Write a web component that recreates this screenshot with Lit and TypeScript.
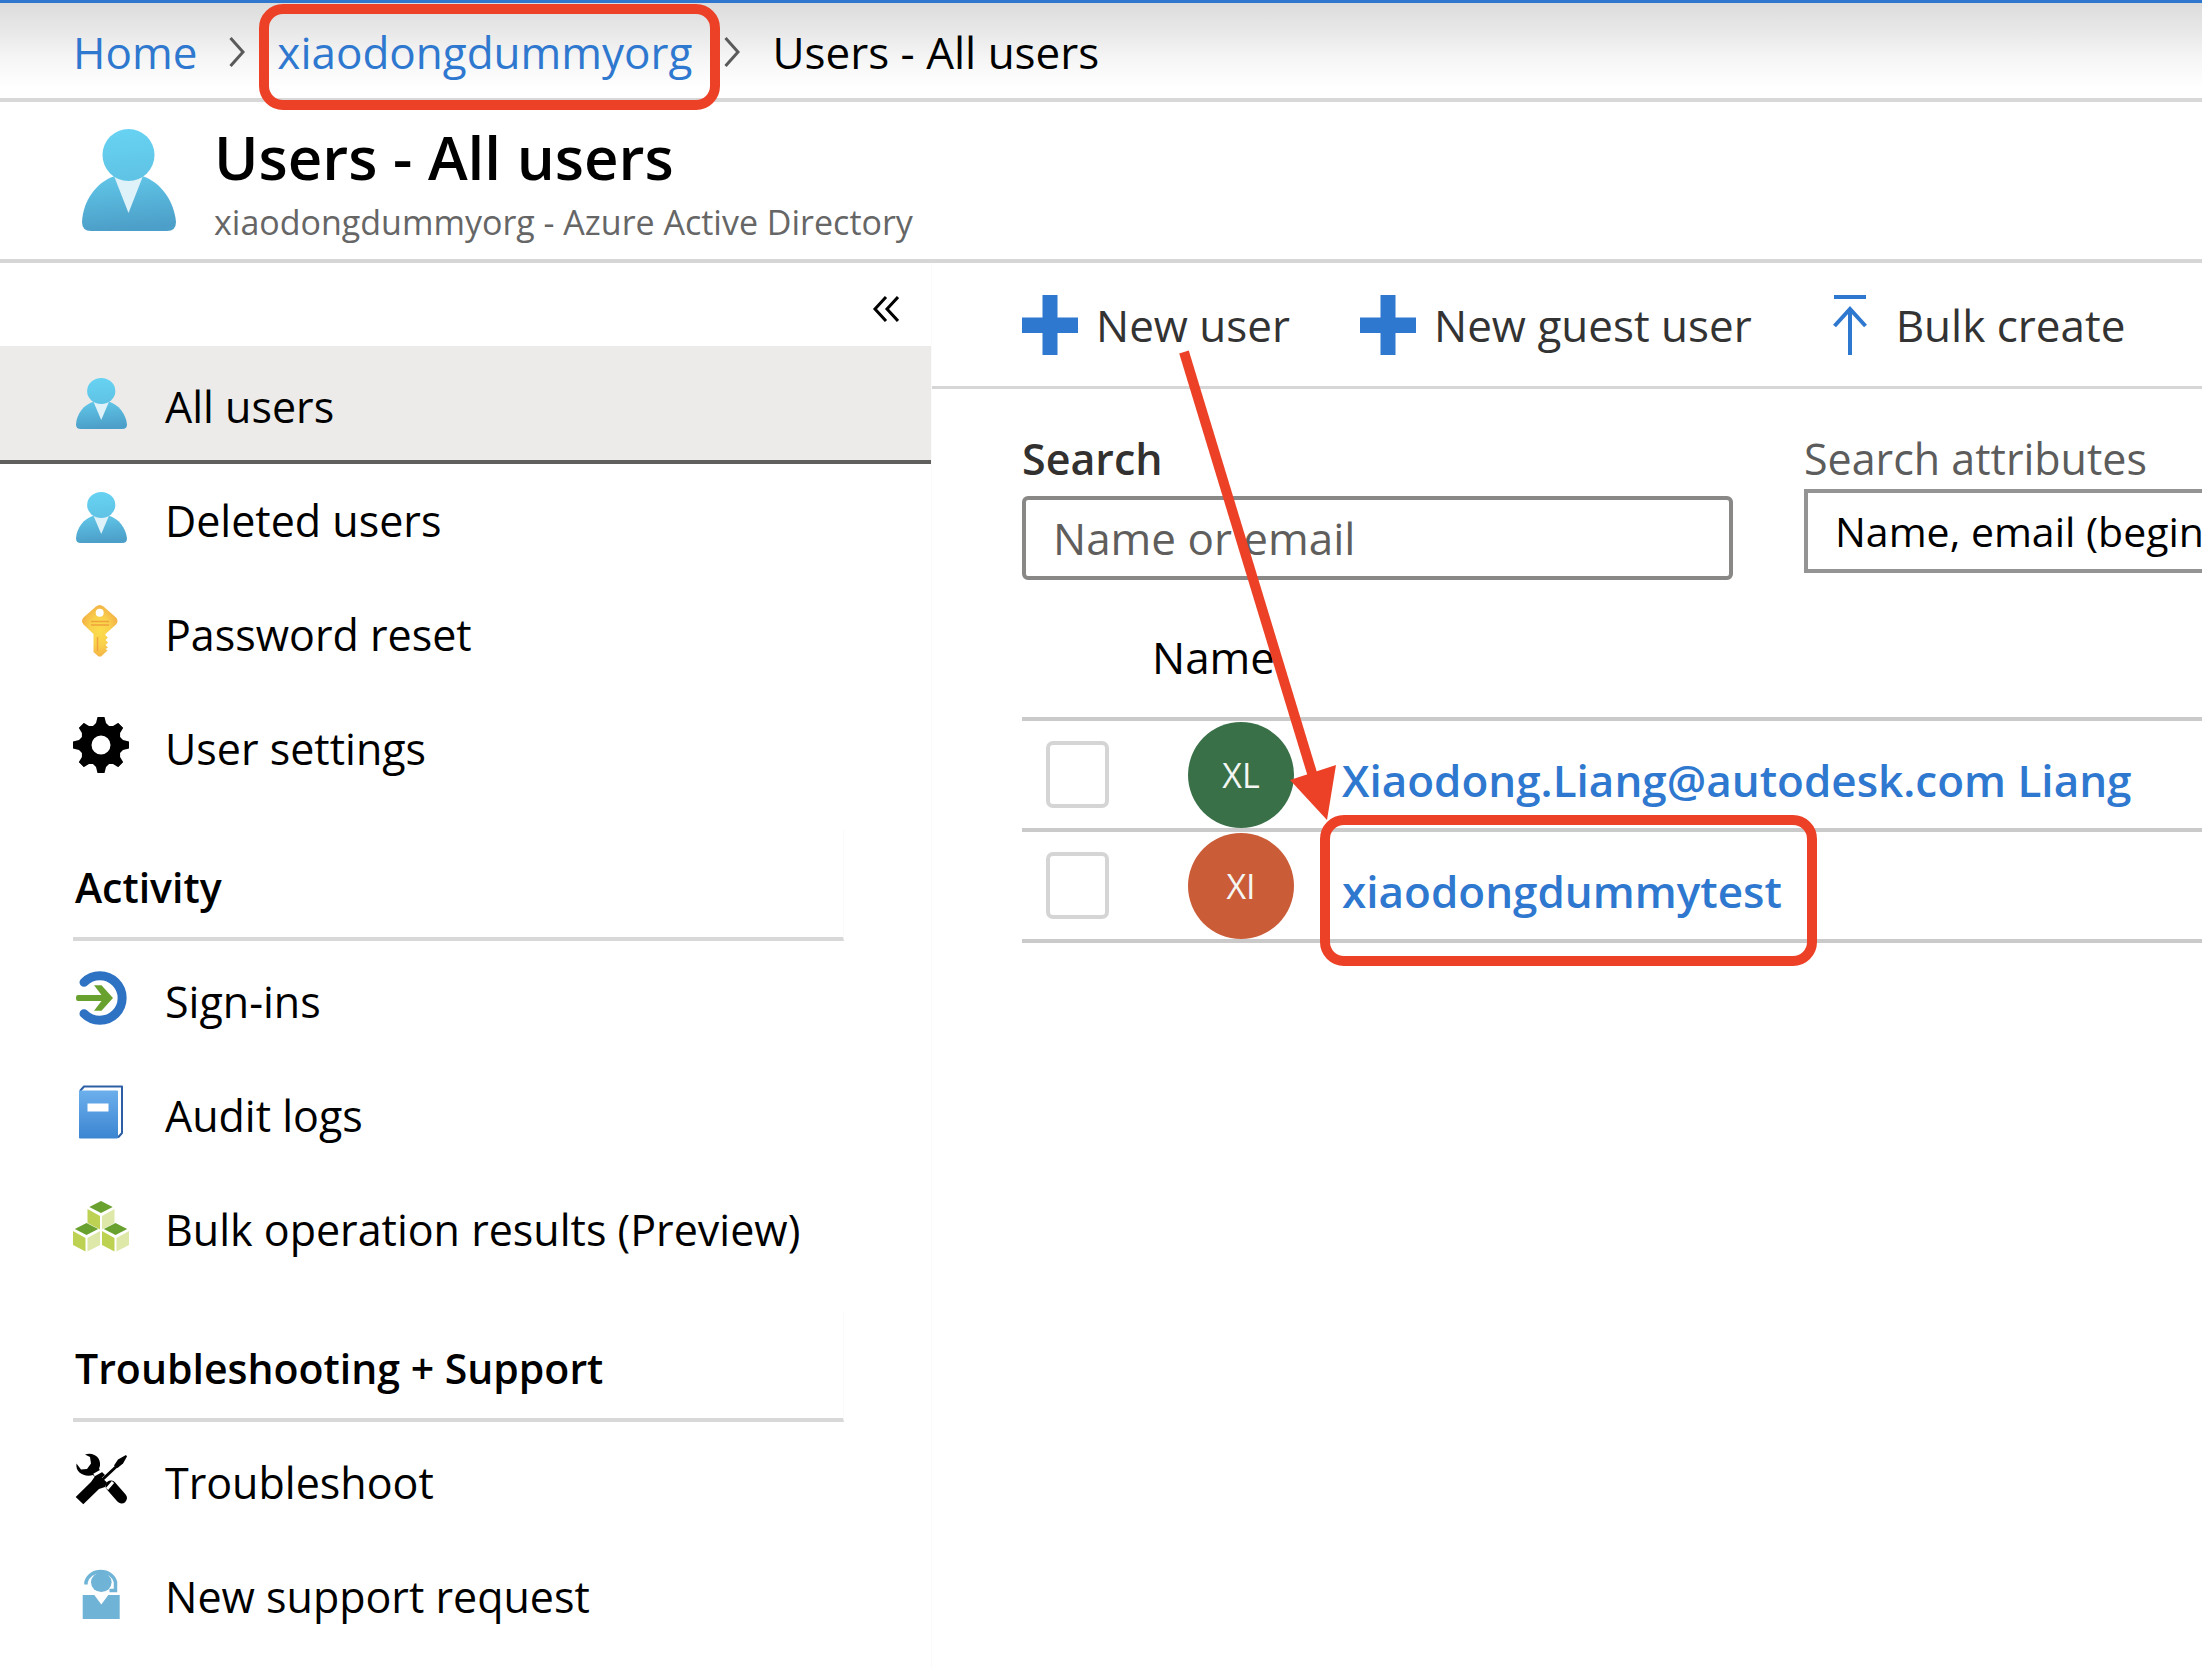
import { LitElement, html, svg, css, nothing, type TemplateResult } from "lit";
import { customElement } from "lit/decorators.js";
import { classMap } from "lit/directives/class-map.js";

interface NavItem {
  label: string;
  icon: TemplateResult;
  selected?: boolean;
}

interface NavGroup {
  title?: string;
  items: NavItem[];
}

interface User {
  name: string;
  initials: string;
  tone: "green" | "orange";
  marked?: boolean;
}

const userIcon = (cls: string) => html`
  <svg class=${cls} viewBox="0 0 94 102" preserveAspectRatio="none" aria-hidden="true">
    <defs>
      <linearGradient id="body" x1="0" y1="0" x2="0.15" y2="1">
        <stop offset="0" stop-color="#62c8ea" />
        <stop offset="1" stop-color="#4c9fc8" />
      </linearGradient>
      <linearGradient id="head" x1="0" y1="0" x2="0.1" y2="1">
        <stop offset="0" stop-color="#68d3f3" />
        <stop offset="1" stop-color="#5fc3e5" />
      </linearGradient>
    </defs>
    <path fill="url(#body)" d="M33 47C14 53 1 72 0 93Q0 102 9 102H85Q94 102 94 93C92 72 79 53 60 47Z" />
    <path fill="#dff1f9" d="M32 47H61L46.500 84Z" />
    <circle fill="url(#head)" cx="46.500" cy="26" r="26" />
  </svg>`;

const icon = (content: TemplateResult) =>
  html`<svg class="nav-icon" viewBox="0 0 56 56" aria-hidden="true">${content}</svg>`;

const smallUser = html`<span class="nav-icon">${userIcon("nav-user")}</span>`;

const keyIcon = icon(svg`
  <defs>
    <radialGradient id="key" cx="0.5" cy="0.5" r="0.55">
      <stop offset="0" stop-color="#fbdc4a" />
      <stop offset="0.5" stop-color="#f9d14b" />
      <stop offset="1" stop-color="#f3ae45" />
    </radialGradient>
  </defs>
  <path fill="url(#key)" fill-rule="evenodd"
    d="M23 3.500Q26.700 0.500 30.500 3.500L43 14.500Q46 18 43 21.500L32.500 31V32.500L35 34.500L32.500 37L35 39.500L32.500 42L35 44.500L32.500 46L34.500 47.500L28 53.500H25.500L20.500 49V31L10.500 21.500Q7.500 18 10.500 14.500ZM26.700 5.700A4 4 0 1 0 26.700 13.700A4 4 0 1 0 26.700 5.700Z" />
  <path stroke="#f0a23c" stroke-width="1.400" fill="none" d="M18 18.500H36M18 22H36M24.500 34V48" />`);

const gearIcon = icon(svg`
  <circle cx="28" cy="28" r="15" fill="none" stroke="#000" stroke-width="11" />
  ${[0, 45, 90, 135, 180, 225, 270, 315].map(
    (a) => svg`<path d="M24.500 0H31.500L33 6L37 10L28 18L19 10L23 6Z" clip-path="url(#ring)" transform="rotate(${a} 28 28)" />`,
  )}
  <clipPath id="ring"><rect x="0" y="0" width="56" height="17" /></clipPath>`);

const signInIcon = icon(svg`
  <path fill="none" stroke="#2d72c3" stroke-width="9" stroke-linecap="round" d="M11 12.300A22.300 22.300 0 1 1 11 43.700" />
  <path fill="#69a12f" d="M5 25H28.500L21 15.300H28.500L40 28L28.500 40.700H21L28.500 31H5Q3 31 3 28T5 25Z" />`);

const auditIcon = icon(svg`
  <defs>
    <linearGradient id="book" x1="0" y1="0" x2="0" y2="1">
      <stop offset="0" stop-color="#6cafec" />
      <stop offset="1" stop-color="#3b85d1" />
    </linearGradient>
  </defs>
  <path fill="#fff" stroke="#2c5fa6" stroke-width="2" stroke-linejoin="round" d="M7 7L11 2.500H49V49L45 53.500" />
  <rect x="6" y="6.500" width="39" height="48" rx="1" fill="url(#book)" />
  <rect x="14.500" y="19.500" width="21" height="8" fill="#fff" />`);

const cube = (dx: number, dy: number) => svg`
  <g transform="translate(${dx} ${dy})">
    <path fill="#69a12f" d="M28 3L39.700 9L28 15L16.300 9Z" />
    <path fill="#bdd253" d="M14.500 11L27 18V31.500L14.500 25Z" />
    <path fill="#dde8a9" d="M41.500 11L29 18V31.500L41.500 25Z" />
  </g>`;

const cubesIcon = icon(svg`${cube(0, 0)}${cube(-14.5, 22)}${cube(14.5, 22)}`);

const toolsIcon = icon(svg`
  <path d="M12 3.500C20 0.500 28 6 27 14.500L26 18L32 24L25.500 29.500L20 24C12 26.500 2 22 3.500 12.500L8 18.500L14 18L18 12.500L17 6Z" />
  <path stroke="#000" stroke-width="11" stroke-linecap="round" d="M38 35L48.500 47" />
  <path stroke="#fff" stroke-width="3" fill="none" d="M21 24L29 19.500M34 38L40 31" />
  <path d="M2.700 46L18 31L21.500 26L26.500 24.500L34 31.500L32 36L26 38L10.300 53.300Z" />
  <path stroke="#000" stroke-width="3" d="M29 29L46 13" />
  <path d="M41 14.500L45 8.500L53 4L54 5.500L50 12.500L44.500 17Z" />`);

const supportIcon = icon(svg`
  <ellipse cx="28.300" cy="17.300" rx="10.300" ry="9.700" fill="#6fb3d6" />
  <path fill="none" stroke="#6fb3d6" stroke-width="3.500" d="M13 19.500V17A15.200 14 0 0 1 42.500 17V25.500H36.500" />
  <path fill="#6fb3d6" d="M9.700 30H21.300L28.300 39.500L35.300 30H46.700V54H9.700Z" />`);

const plusIcon = html`
  <svg class="command-icon" viewBox="0 0 56 60" aria-hidden="true">
    <path fill="#2f78cf" d="M20.500 0H35.500V22.500H56V38H35.500V60H20.500V38H0V22.500H20.500Z" />
  </svg>`;

const uploadIcon = html`
  <svg class="command-icon" viewBox="0 0 56 60" aria-hidden="true">
    <path fill="none" stroke="#2f78cf" stroke-width="4" d="M12 2H44M28 14V60M12.500 31L28 14L43.500 31" />
  </svg>`;

const chevron = html`
  <svg class="chevron" viewBox="0 0 16 30" aria-hidden="true">
    <path fill="none" stroke="#5a5a5a" stroke-width="3" d="M1.500 1L14 15L1.500 29" />
  </svg>`;

const groups: NavGroup[] = [
  {
    items: [
      { label: "All users", icon: smallUser, selected: true },
      { label: "Deleted users", icon: smallUser },
      { label: "Password reset", icon: keyIcon },
      { label: "User settings", icon: gearIcon },
    ],
  },
  {
    title: "Activity",
    items: [
      { label: "Sign-ins", icon: signInIcon },
      { label: "Audit logs", icon: auditIcon },
      { label: "Bulk operation results (Preview)", icon: cubesIcon },
    ],
  },
  {
    title: "Troubleshooting + Support",
    items: [
      { label: "Troubleshoot", icon: toolsIcon },
      { label: "New support request", icon: supportIcon },
    ],
  },
];

const users: User[] = [
  { name: "Xiaodong.Liang@autodesk.com Liang", initials: "XL", tone: "green" },
  { name: "xiaodongdummytest", initials: "XI", tone: "orange", marked: true },
];

@customElement("app-root")
export class AppRoot extends LitElement {
  static styles = css`
    :host {
      display: flex;
      flex-direction: column;
      min-height: 100vh;
      overflow: hidden;
      background: #fff;
      color: #000;
      font-family: "Open Sans", "Noto Sans", sans-serif;
      font-size: 43px;
      line-height: 60px;
    }
    *, *::before, *::after { box-sizing: border-box; }
    a { color: inherit; text-decoration: none; }
    button, input, select { font: inherit; color: inherit; margin: 0; }
    button { background: none; border: 0; padding: 0; cursor: pointer; }
    svg { display: block; flex: none; }

    .breadcrumb {
      display: flex;
      align-items: center;
      gap: 32px;
      height: 102px;
      padding: 2px 73px 0;
      border-top: 3px solid #2f76cf;
      border-bottom: 4px solid #d8d8d8;
      background: linear-gradient(#dcdcdc, #e6e6e6 25%, #f6f6f6 60%, #fff 90%);
      font-size: 44px;
      white-space: nowrap;
    }
    .breadcrumb a { color: #2f78cf; }
    .chevron { width: 16px; height: 30px; }

    .marked { position: relative; }
    .marked::after {
      content: "";
      position: absolute;
      border: 10px solid #ec4127;
      border-radius: 24px;
      pointer-events: none;
    }
    .breadcrumb .marked::after { inset: -18px -28px -28px -18px; }
    .user-link.marked::after { inset: -46px -35px -45px -22px; }

    .header {
      display: flex;
      align-items: flex-start;
      gap: 38px;
      padding: 17px 82px 10px;
      border-bottom: 4px solid #d6d6d6;
    }
    .header-icon { width: 94px; height: 102px; margin-top: 10px; }
    h1 { margin: 0; font-size: 60px; font-weight: 600; line-height: 76px; }
    .subtitle { margin: 0; color: #666; font-size: 34px; line-height: 54px; }

    .body { display: flex; flex: 1; }
    .sidebar { flex: none; width: 932px; border-right: 1px solid #fafafa; }
    .collapse-row {
      display: flex;
      justify-content: flex-end;
      align-items: center;
      height: 83px;
      padding: 8px 32px 0;
    }
    .collapse { width: 27px; height: 26px; }
    .group + .group { margin-top: 28px; }
    .group-title {
      width: 771px;
      height: 111px;
      margin: 0 0 0 73px;
      padding: 27px 0 0 2px;
      border-bottom: 4px solid #d8d8d8;
      border-right: 1px solid #fafafa;
      font-size: 41px;
      font-weight: 600;
    }
    .items { list-style: none; margin: 0; padding: 0; }
    .nav-item {
      display: flex;
      align-items: center;
      gap: 36px;
      height: 114px;
      padding-left: 73px;
      white-space: nowrap;
    }
    .nav-item.selected { background: #ecebe9; box-shadow: 0 4px 0 #605f5d; }
    .nav-icon { display: block; flex: none; width: 56px; height: 56px; }
    .nav-user { width: 51px; height: 51px; margin: 3px; }
    .nav-label { padding-top: 8px; }

    .main { flex: 1; min-width: 0; }
    .commands {
      display: flex;
      align-items: center;
      gap: 70px;
      height: 126px;
      padding-left: 90px;
      border-bottom: 3px solid #d6d6d6;
      color: #333;
      font-size: 44px;
    }
    .command { position: relative; display: flex; align-items: center; gap: 18px; white-space: nowrap; }
    .command-icon { width: 56px; height: 60px; }
    .arrow {
      position: absolute;
      z-index: 1;
      left: 152px;
      top: 52px;
      width: 166px;
      height: 474px;
      pointer-events: none;
    }

    .filters {
      display: grid;
      grid-template-columns: 711px 711px;
      gap: 71px;
      padding: 40px 0 0 90px;
    }
    .field { display: flex; flex-direction: column; }
    .search-label { color: #323130; font-weight: 600; }
    .attribute-label { color: #5c5c5c; }
    .search {
      width: 100%;
      height: 84px;
      margin-top: 7px;
      padding: 0 27px;
      border: 4px solid #8a8886;
      border-radius: 6px;
      background: #fff;
      font-size: 44px;
    }
    .search::placeholder { color: #605e5c; opacity: 1; }
    .attribute {
      appearance: none;
      width: 100%;
      height: 84px;
      padding: 0 27px;
      border: 4px solid #949494;
      border-radius: 0;
      background: #fff;
      font-size: 41px;
    }

    .table-wrap { padding: 16px 0 0 90px; }
    .users { width: 100%; border-collapse: separate; border-spacing: 0; table-layout: fixed; font-size: 44px; }
    .users th, .users td { padding: 0; border-bottom: 4px solid #cacaca; text-align: left; }
    .users th { height: 125px; font-weight: 400; }
    .users td { height: 111px; }
    .users .pick { width: 130px; padding-left: 24px; }
    .check {
      appearance: none;
      display: block;
      width: 63px;
      height: 67px;
      border: 4px solid #d5d5d5;
      border-radius: 7px;
      background: #fff;
    }
    .person { display: flex; align-items: center; gap: 48px; padding-left: 36px; white-space: nowrap; }
    .avatar {
      display: flex;
      flex: none;
      align-items: center;
      justify-content: center;
      width: 106px;
      height: 106px;
      border-radius: 50%;
      color: #f3f6f2;
      font-size: 34px;
    }
    .avatar.green { background: #397048; }
    .avatar.orange { background: #cb5c38; }
    .user-link { margin-top: 10px; color: #2f78cf; font-weight: 600; }
  `;

  private renderGroup(group: NavGroup) {
    return html`
      <section class="group">
        ${group.title ? html`<h2 class="group-title">${group.title}</h2>` : nothing}
        <ul class="items">
          ${group.items.map(
            (item) => html`
              <li>
                <a
                  href="#"
                  class=${classMap({ "nav-item": true, selected: !!item.selected })}
                  aria-current=${item.selected ? "page" : nothing}
                >
                  ${item.icon}<span class="nav-label">${item.label}</span>
                </a>
              </li>`,
          )}
        </ul>
      </section>`;
  }

  private renderUser(user: User) {
    return html`
      <tr>
        <td class="pick"><input class="check" type="checkbox" aria-label=${user.name} /></td>
        <td>
          <div class="person">
            <span class="avatar ${user.tone}">${user.initials}</span>
            <a href="#" class=${classMap({ "user-link": true, marked: !!user.marked })}>${user.name}</a>
          </div>
        </td>
      </tr>`;
  }

  render() {
    return html`
      <nav class="breadcrumb" aria-label="Breadcrumb">
        <a href="#">Home</a>${chevron}<a href="#" class="marked">xiaodongdummyorg</a>${chevron}<span>Users - All users</span>
      </nav>
      <header class="header">
        ${userIcon("header-icon")}
        <div>
          <h1>Users - All users</h1>
          <p class="subtitle">xiaodongdummyorg - Azure Active Directory</p>
        </div>
      </header>
      <div class="body">
        <nav class="sidebar" aria-label="Users">
          <div class="collapse-row">
            <button class="collapse" aria-label="Collapse">
              <svg viewBox="0 0 27 26" width="27" height="26">
                <path fill="none" stroke="#000" stroke-width="3" d="M14 1L3 13L14 25M26 1L15 13L26 25" />
              </svg>
            </button>
          </div>
          ${groups.map((g) => this.renderGroup(g))}
        </nav>
        <main class="main">
          <div class="commands">
            <button class="command">
              ${plusIcon}<span>New user</span>
              <svg class="arrow" viewBox="0 0 166 474" aria-hidden="true">
                <path stroke="#ec4127" stroke-width="10" d="M10 5L141 436" />
                <path fill="#ec4127" d="M116 433L162 418L153 473Z" />
              </svg>
            </button>
            <button class="command">${plusIcon}<span>New guest user</span></button>
            <button class="command">${uploadIcon}<span>Bulk create</span></button>
          </div>
          <div class="filters">
            <div class="field">
              <label class="search-label" for="search">Search</label>
              <input class="search" id="search" type="text" placeholder="Name or email" />
            </div>
            <div class="field">
              <label class="attribute-label" for="attribute">Search attributes</label>
              <select class="attribute" id="attribute">
                <option>Name, email (begins with)</option>
              </select>
            </div>
          </div>
          <div class="table-wrap">
            <table class="users">
              <thead>
                <tr>
                  <th class="pick" scope="col"></th>
                  <th scope="col">Name</th>
                </tr>
              </thead>
              <tbody>
                ${users.map((u) => this.renderUser(u))}
              </tbody>
            </table>
          </div>
        </main>
      </div>
    `;
  }
}
